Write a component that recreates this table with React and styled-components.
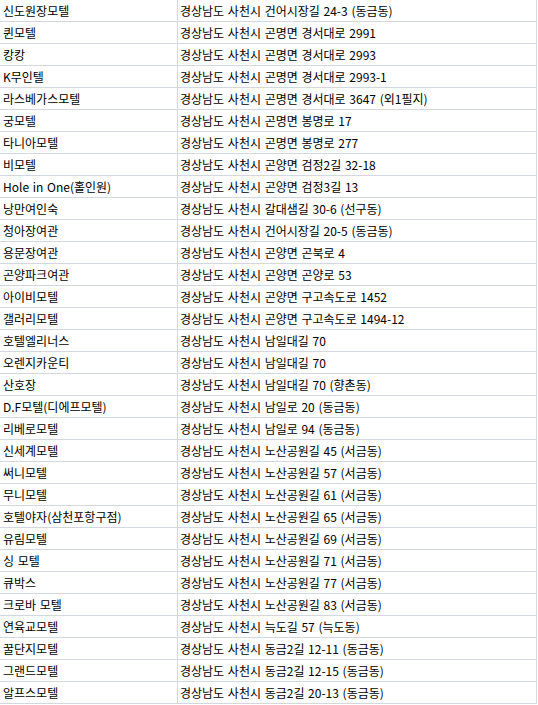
import React from "react";
import styled, { createGlobalStyle } from "styled-components";

const Global = createGlobalStyle`
  html, body { margin: 0; padding: 0; background: #ffffff; }
  body { font-family: "Noto Sans CJK KR", "Noto Sans", sans-serif; }
`;

const rows = [
  ["신도원장모텔", "경상남도 사천시 건어시장길 24-3 (동금동)"],
  ["퀸모텔", "경상남도 사천시 곤명면 경서대로 2991"],
  ["캉캉", "경상남도 사천시 곤명면 경서대로 2993"],
  ["K무인텔", "경상남도 사천시 곤명면 경서대로 2993-1"],
  ["라스베가스모텔", "경상남도 사천시 곤명면 경서대로 3647 (외1필지)"],
  ["궁모텔", "경상남도 사천시 곤명면 봉명로 17"],
  ["타니아모텔", "경상남도 사천시 곤명면 봉명로 277"],
  ["비모텔", "경상남도 사천시 곤양면 검정2길 32-18"],
  ["Hole in One(홀인원)", "경상남도 사천시 곤양면 검정3길 13"],
  ["낭만여인숙", "경상남도 사천시 갈대샘길 30-6 (선구동)"],
  ["청아장여관", "경상남도 사천시 건어시장길 20-5 (동금동)"],
  ["용문장여관", "경상남도 사천시 곤양면 곤북로 4"],
  ["곤양파크여관", "경상남도 사천시 곤양면 곤양로 53"],
  ["아이비모텔", "경상남도 사천시 곤양면 구고속도로 1452"],
  ["갤러리모텔", "경상남도 사천시 곤양면 구고속도로 1494-12"],
  ["호텔엘리너스", "경상남도 사천시 남일대길 70"],
  ["오렌지카운티", "경상남도 사천시 남일대길 70"],
  ["산호장", "경상남도 사천시 남일대길 70 (향촌동)"],
  ["D.F모텔(디에프모텔)", "경상남도 사천시 남일로 20 (동금동)"],
  ["리베로모텔", "경상남도 사천시 남일로 94 (동금동)"],
  ["신세계모텔", "경상남도 사천시 노산공원길 45 (서금동)"],
  ["써니모텔", "경상남도 사천시 노산공원길 57 (서금동)"],
  ["무니모텔", "경상남도 사천시 노산공원길 61 (서금동)"],
  ["호텔야자(삼천포항구점)", "경상남도 사천시 노산공원길 65 (서금동)"],
  ["유림모텔", "경상남도 사천시 노산공원길 69 (서금동)"],
  ["싱 모텔", "경상남도 사천시 노산공원길 71 (서금동)"],
  ["큐박스", "경상남도 사천시 노산공원길 77 (서금동)"],
  ["크로바 모텔", "경상남도 사천시 노산공원길 83 (서금동)"],
  ["연육교모텔", "경상남도 사천시 늑도길 57 (늑도동)"],
  ["꿀단지모텔", "경상남도 사천시 동금2길 12-11 (동금동)"],
  ["그랜드모텔", "경상남도 사천시 동금2길 12-15 (동금동)"],
  ["알프스모텔", "경상남도 사천시 동금2길 20-13 (동금동)"],
];

const Sheet = styled.div`
  display: grid;
  grid-template-columns: 178px 359px;
  grid-auto-rows: 22px;
  width: 537px;
`;

const Cell = styled.div`
  box-sizing: border-box;
  height: 22px;
  border-right: 1px solid #d3d8e0;
  border-bottom: 1px solid #d3d8e0;
  padding-left: ${(p) => p.$pad}px;
  display: flex;
  align-items: center;
  font-family: "Noto Sans CJK KR", "Noto Sans", sans-serif;
  font-size: 12px;
  line-height: 21px;
  word-spacing: 1px;
  color: #000000;
  white-space: nowrap;
  overflow: hidden;
`;

export default function App() {
  return (
    <>
      <Global />
      <Sheet>
        {rows.map(([name, addr], i) => (
          <React.Fragment key={i}>
            <Cell $pad={3}>{name}</Cell>
            <Cell $pad={2}>{addr}</Cell>
          </React.Fragment>
        ))}
      </Sheet>
    </>
  );
}
